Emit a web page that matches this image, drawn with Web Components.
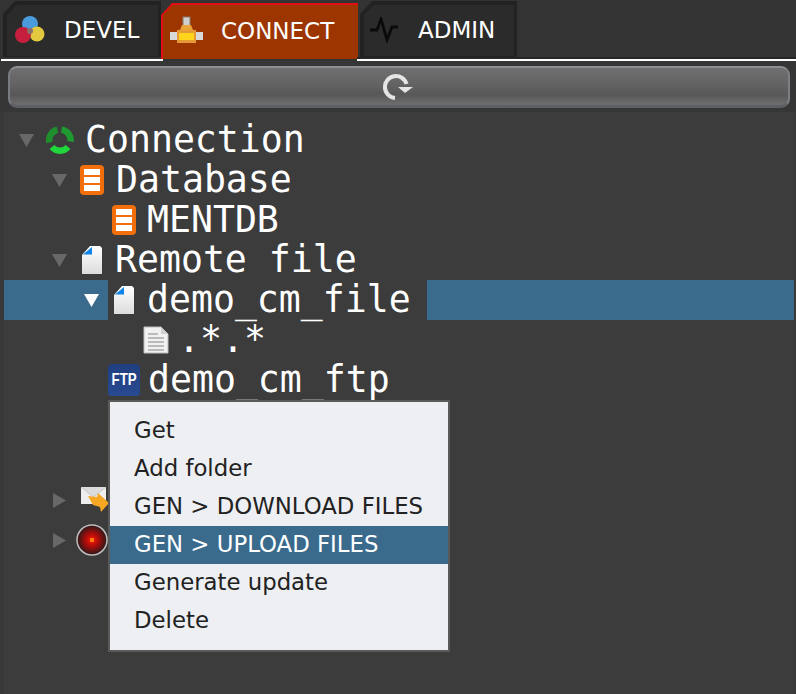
<!DOCTYPE html>
<html><head><meta charset="utf-8">
<style>
html,body{margin:0;padding:0;width:796px;height:694px;overflow:hidden;background:#3c3c3c}
</style></head>
<body>
<app-shell>
  <tab-bar slot="tabs">
    <tab-item width="158" style="margin-left:3px" label-x="61" icon-x="8">
      <svg slot="icon" width="30" height="30" viewBox="0 0 30 30"><circle cx="15" cy="9" r="8" fill="#4a9bdc"/><circle cx="22" cy="19" r="7.500" fill="#e3c93f"/><circle cx="8" cy="20" r="8" fill="#c51f3d"/><circle cx="15" cy="16" r="3" fill="#8a6f6a"/></svg>
      DEVEL
    </tab-item>
    <tab-item active width="197" label-x="62" icon-x="7">
      <svg slot="icon" width="34" height="30" viewBox="0 0 34 30"><rect x="13" y="1" width="7" height="11" fill="#d0d0d0" stroke="#8a7a6a"/><rect x="0" y="16" width="8" height="8" fill="#d8d8d8"/><rect x="26" y="16" width="7" height="8" fill="#d8d8d8"/><path d="M12 9h9l2 5H10z" fill="#e9a53a"/><rect x="7" y="14" width="19" height="13" fill="#e59a35"/><rect x="9" y="17" width="15" height="7" fill="#ffd51c"/></svg>
      CONNECT
    </tab-item>
    <tab-item width="157" style="margin-left:2px" label-x="58" icon-x="5">
      <svg slot="icon" width="30" height="26" viewBox="0 0 30 26"><path d="M1 13h7l4-11 6 21 5-13h6" fill="none" stroke="#0a0a0a" stroke-width="2.800"/></svg>
      ADMIN
    </tab-item>
  </tab-bar>
  <tool-button slot="tool">
    <svg width="32" height="26" viewBox="0 0 32 26" style="margin-left:-2px"><path d="M13 24A11 11 0 1 1 24.500 10" fill="none" stroke="#e4e6e4" stroke-width="4"/><path d="M16 13h15l-8 6z" fill="#e4e6e4"/></svg>
  </tool-button>
  <tree-view slot="tree">
    <tree-row level="0" arrow="down" gap="11">
      <svg slot="icon" width="28" height="28" viewBox="0 0 28 28"><g fill="none" stroke-width="6.500"><path d="M3.500 16.500A10.500 10.500 0 0 1 11.500 3.800" stroke="#1e8f2c"/><path d="M15.500 3.600A10.500 10.500 0 0 1 24.500 15.500" stroke="#1e9a30"/><path d="M6 21A10.500 10.500 0 0 0 22 21" stroke="#1fd63c"/></g></svg>
      Connection
    </tree-row>
    <tree-row level="1" arrow="down" gap="12">
      <db-icon slot="icon"></db-icon>
      Database
    </tree-row>
    <tree-row level="2" gap="11">
      <db-icon slot="icon"></db-icon>
      MENTDB
    </tree-row>
    <tree-row level="1" arrow="down" gap="13" icon-at="82">
      <file-icon slot="icon"></file-icon>
      Remote file
    </tree-row>
    <tree-row level="2" arrow="down" selected gap="13" icon-at="114">
      <file-icon slot="icon"></file-icon>
      demo_cm_file
    </tree-row>
    <tree-row level="3" gap="9" icon-at="143">
      <svg slot="icon" width="26" height="28" viewBox="0 0 26 28"><path d="M1 1h17l7 7v19H1z" fill="#f1f1f1" stroke="#bdbdbd"/><path d="M18 1l7 7h-7z" fill="#cfcfcf"/><g stroke="#a9a9a9" stroke-width="1.500"><path d="M5 8h10M5 12h16M5 16h16M5 20h16M5 24h16"/></g></svg>
      .*.*
    </tree-row>
    <tree-row level="2" gap="8" icon-at="108">
      <ftp-icon slot="icon"></ftp-icon>
      demo_cm_ftp
    </tree-row>
    <tree-row level="2"></tree-row>
    <tree-row level="2"></tree-row>
    <tree-row level="1" arrow="right" gap="8">
      <svg slot="icon" width="30" height="28" viewBox="0 0 30 28"><rect x="1" y="1" width="25" height="17" fill="#eeeeee"/><path d="M1 1l12.500 10L26 1" fill="#dcdcdc" stroke="#c8c8c8"/><path d="M8 10l9 1 1-4 11 10-8 9-1-5-7-2z" fill="#f5a623"/></svg>
    </tree-row>
    <tree-row level="1" arrow="right" gap="8" icon-at="76">
      <svg slot="icon" width="32" height="32" viewBox="0 0 32 32"><defs><radialGradient id="r"><stop offset="0" stop-color="#ff1a00"/><stop offset=".45" stop-color="#a80c0c"/><stop offset="1" stop-color="#2a1a1a"/></radialGradient></defs><circle cx="16" cy="16" r="15" fill="url(#r)" stroke="#bdbdbd" stroke-width="1.500"/><rect x="14" y="14" width="4" height="4" fill="#ff7a10"/></svg>
    </tree-row>
  </tree-view>
  <context-menu slot="menu">
    <menu-entry>Get</menu-entry>
    <menu-entry>Add folder</menu-entry>
    <menu-entry>GEN &gt; DOWNLOAD FILES</menu-entry>
    <menu-entry active>GEN &gt; UPLOAD FILES</menu-entry>
    <menu-entry>Generate update</menu-entry>
    <menu-entry>Delete</menu-entry>
  </context-menu>
</app-shell>
<script>
function def(name, css, html, init){
  customElements.define(name, class extends HTMLElement{
    constructor(){super();this.attachShadow({mode:'open'}).innerHTML='<style>'+css+'</style>'+html;}
    connectedCallback(){ if(init) init(this); }
  });
}
const UI='"DejaVu Sans","Liberation Sans",sans-serif';
def('app-shell',
 `:host{display:flex;flex-direction:column;position:relative;width:796px;height:694px;background:#383838;overflow:hidden}
  .tool{background:#363636;padding:5px 6px 4px 8px}
  .main{flex:1;background:#3c3c3c;padding:8px 0 0 0;margin:0 2px 0 4px}`,
 `<slot name="tabs"></slot><div class="tool"><slot name="tool"></slot></div><div class="main"><slot name="tree"></slot></div><slot name="menu"></slot>`);
def('tab-bar',
 `:host{display:flex;height:61px;background:#333;box-sizing:border-box;align-items:flex-start;padding-top:1px;position:relative}
  .l{position:absolute;height:2px;background:#fff;top:59px}
  .a{left:1px;width:162px}.b{left:357px;right:0}
  .d{position:absolute;top:57px;left:357px;right:0;height:2px;background:#262626}`,
 `<slot></slot><i class="d"></i><i class="l a"></i><i class="l b"></i>`);
def('tab-item',
 `:host{display:block;height:56px;font:23px ${UI};color:#fff;white-space:nowrap}
  .o{height:100%;background:#222;clip-path:polygon(12px 0,100% 0,100% 100%,0 100%,0 13px);padding:4px 3px 1px 4px;box-sizing:border-box}
  .i{height:100%;background:#2b2b2b;clip-path:polygon(10px 0,100% 0,100% 100%,0 100%,0 10px);display:flex;align-items:center;position:relative}
  .ic{position:absolute;top:50%;transform:translateY(calc(-50% - 1px));display:flex}
  .t{position:absolute;top:50%;transform:translateY(calc(-50% - 1px));line-height:1}
  :host([active]){height:56px;margin-top:2px}
  :host([active]) .o{background:#e10f0f;padding:2px 0 0 2px;clip-path:polygon(11px 0,100% 0,100% 100%,0 100%,0 12px)}
  :host([active]) .i{background:#9c3500}`,
 `<div class="o"><div class="i"><span class="ic"><slot name="icon"></slot></span><span class="t"><slot></slot></span></div></div>`,
 h=>{h.style.width=h.getAttribute('width')+'px';const s=h.shadowRoot;
  s.querySelector('.t').style.left=(+h.getAttribute('label-x')-4)+'px';
  s.querySelector('.ic').style.left=h.getAttribute('icon-x')+'px';});
def('tool-button',
 `:host{display:flex;height:42px;box-sizing:border-box;align-items:center;justify-content:center;border-radius:9px;
   background:linear-gradient(#6f6f6f 0,#636363 45%,#585858 72%,#6e6e6e 100%);
   border-top:2px solid #8c9094;border-left:2px solid #787c80;border-right:2px solid #7c8084;border-bottom:3px solid #5c6066}
  slot{display:flex}`,
 `<slot></slot>`);
def('tree-view',`:host{display:block}`,`<slot></slot>`);
def('tree-row',
 `:host{display:flex;height:40px;align-items:center;font:36.500px "DejaVu Sans Mono","Liberation Mono",monospace;color:#fff;white-space:nowrap;box-sizing:border-box}
  :host([selected]){background:#3a6a8c}
  .ar{width:15px;height:15px;flex:none;display:flex;align-items:center;justify-content:center}
  .box{display:flex;align-items:center;height:100%;flex:none}
  :host([selected]) .box{background:#3c3c3c}
  .ic{display:flex;align-items:center;justify-content:center;flex:none}
  .t{position:relative;top:-1px}`,
 `<span class="ar"></span><span class="box"><span class="ic"><slot name="icon"></slot></span><span class="t"><slot></slot></span></span>`,
 h=>{
  const lv=+h.getAttribute('level'), a=h.getAttribute('arrow'), s=h.shadowRoot;
  const iconX=+h.getAttribute('icon-at')||[46,80,112,145][lv]; const arrowX=[19,52,84,0][lv];
  const ar=s.querySelector('.ar'), box=s.querySelector('.box');
  const ml=arrowX-4;
  ar.style.marginLeft=ml+'px';
  const sel=h.hasAttribute('selected');
  const col=sel?'#fff':'#686868';
  if(a==='down') ar.innerHTML=`<svg width="15" height="15" viewBox="0 0 15 15"><path d="M0 1h15L7.500 14z" fill="${col}"/></svg>`;
  else if(a==='right') ar.innerHTML=`<svg width="15" height="15" viewBox="0 0 15 15"><path d="M1 0v15l13-7.500z" fill="${col}"/></svg>`;
  const boxX=sel?108:iconX;
  box.style.marginLeft=(boxX-4-ml-15)+'px';
  const ic=s.querySelector('.ic');
  if(sel) ic.style.marginLeft=(iconX-108)+'px';
  ic.style.marginRight=(+h.getAttribute('gap')||0)+'px';
  if(sel) s.querySelector('.t').style.paddingRight='16px';
 });
def('db-icon',
 `:host{display:block;width:24px;height:30px;box-sizing:border-box;background:#f26f0b;border-radius:4px;padding:4px}
  i{display:block;height:6px;background:#fff;margin-bottom:2px}`,
 `<i></i><i></i><i></i>`);
def('file-icon',
 `:host{display:block;width:20px;height:28px}
  svg{display:block}`,
 `<svg width="20" height="28" viewBox="0 0 20 28"><defs><linearGradient id="g" x1="0" y1="0" x2="0" y2="1"><stop offset="0" stop-color="#fff"/><stop offset="1" stop-color="#dcdcdc"/></linearGradient></defs><path d="M8 0h10l2 2v26H0V9z" fill="url(#g)"/><path d="M10 1L1 8.500h9z" fill="#0d84e8"/></svg>`);
def('ftp-icon',
 `:host{display:flex;width:32px;height:32px;box-sizing:border-box;background:linear-gradient(#1f3f80,#2a4a90);border-radius:4px;align-items:center;justify-content:center;color:#fff;font:bold 17px "Liberation Sans",sans-serif}
  span{transform:scaleX(.78);display:block}`,
 `<span>FTP</span>`);
def('context-menu',
 `:host{position:absolute;left:108px;top:400px;width:342px;height:252px;box-sizing:border-box;display:block;background:#edeff3;border:2px solid #5a5a5a;padding:10px 0}`,
 `<slot></slot>`);
def('menu-entry',
 `:host{display:flex;align-items:center;height:38px;padding-left:24px;font:22.800px ${UI};color:#222;white-space:nowrap}
  :host([active]){background:#3a6a8c;color:#fff}
  span{position:relative;top:-1px}`,
 `<span><slot></slot></span>`);
</script>
</body></html>
